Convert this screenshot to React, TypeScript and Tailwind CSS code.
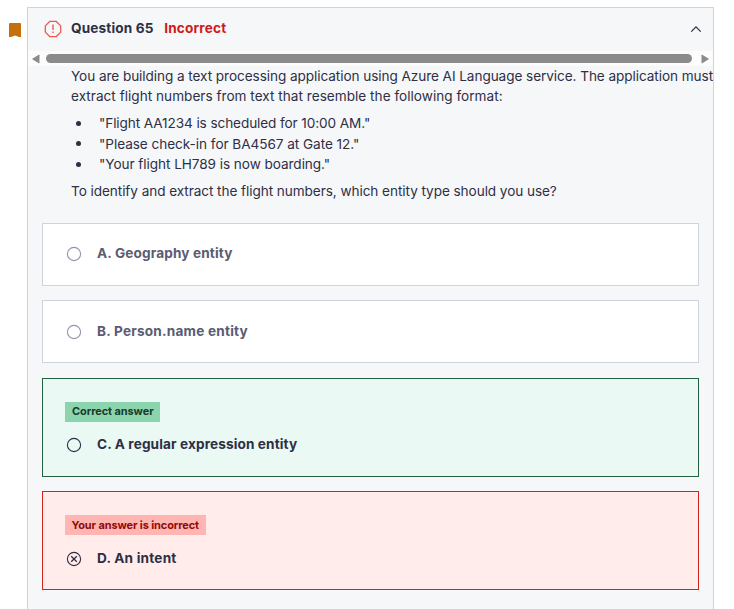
import type { ReactNode } from "react";

function Radio({ className, crossed = false }: { className: string; crossed?: boolean }) {
  return (
    <svg width="16" height="16" viewBox="0 0 16 16" fill="none" stroke="currentColor" className={"shrink-0 " + className}>
      <circle cx="8" cy="8" r="6.6" strokeWidth="1.1" />
      {crossed && <path d="M5.2 5.2l5.6 5.6M10.8 5.2l-5.6 5.6" strokeWidth="1.3" />}
    </svg>
  );
}

function Answer({
  box,
  text,
  radio,
  badge,
  crossed,
  children,
}: {
  box: string;
  text: string;
  radio: string;
  badge?: ReactNode;
  crossed?: boolean;
  children: ReactNode;
}) {
  return (
    <div className={"flex flex-col border pl-[22px] " + box}>
      {badge}
      <div className="flex h-5 items-center pl-px">
        <Radio className={radio} crossed={crossed} />
        <span className={"ml-[15px] whitespace-nowrap pb-0.5 font-bold " + text}>{children}</span>
      </div>
    </div>
  );
}

function Bullet({ text, children }: { text: string; children: ReactNode }) {
  return (
    <li className="flex items-center">
      <i className="ml-[5px] mr-[18px] size-[5px] rounded-full bg-[#2d2f45]" />
      <span className={text}>{children}</span>
    </li>
  );
}

export default function App() {
  return (
    <div className="flex h-[609px] w-[734px] overflow-hidden bg-white pt-[7px] font-['Inter','Liberation_Sans',sans-serif] text-[13.6px] leading-[20.4px] text-[#2d2f45]">
      <div className="w-[27px] shrink-0 pl-[9px] pt-4">
        <svg width="12" height="15" viewBox="0 0 12 15" fill="#c4710d">
          <path d="M1 0h10q1 0 1 1v13H10L6 12.6 2 14H0V1Q0 0 1 0z" />
        </svg>
      </div>
      <div className="flex h-[620px] w-[687px] shrink-0 flex-col border border-[#d1d2e0] bg-[#f6f7f9]">
        <div className="flex h-[43px] shrink-0 items-center pl-4 pr-[11px]">
          <svg width="18" height="18" viewBox="0 0 18 18" fill="none" stroke="#f0574e" strokeWidth="1.3" className="mb-0.5 shrink-0">
            <path d="M5.9 1.3h6.2l4.6 4.6v6.2l-4.6 4.6H5.9l-4.6-4.6V5.9z" strokeLinejoin="round" />
            <path d="M9 4.5v5.6M9 11.6v1.5" strokeWidth="1.4" />
          </svg>
          <span className="ml-[9px] whitespace-nowrap pb-0.5 font-bold tracking-[0.16px]">Question 65</span>
          <span className="ml-[10.5px] whitespace-nowrap pb-0.5 font-bold tracking-[0.18px] text-[#d01b18]">Incorrect</span>
          <svg width="12" height="12" viewBox="0 0 12 12" fill="none" stroke="#2d2f45" strokeWidth="1.3" className="mb-0.5 ml-auto">
            <path d="M1.3 8.6L6 3.9l4.7 4.7" />
          </svg>
        </div>
        <div className="flex h-[15px] shrink-0 items-center bg-[#fcfcfc] pl-1 pr-[4px]">
          <svg width="8" height="10" viewBox="0 0 8 10" fill="#8b8b8b"><path d="M7.5 1.2v7.6q0 .8-.8.4L.6 5.5q-.6-.5 0-1L6.7.8q.8-.4.8.4z" /></svg>
          <div className="mx-[6px] mr-[9px] h-[9px] flex-1 rounded-full bg-[#8b8b8b]" />
          <svg width="8" height="10" viewBox="0 0 8 10" fill="#8b8b8b"><path d="M.5 1.2v7.6q0 .8.8.4l6.1-3.7q.6-.5 0-1L1.3.8Q.5.4.5 1.2z" /></svg>
        </div>
        <div className="flex h-[157px] shrink-0 flex-col overflow-hidden whitespace-nowrap pl-[43px]">
          <p className="tracking-[-0.072px]">You are building a text processing application using Azure AI Language service. The application must</p>
          <p className="tracking-[0.015px]">extract flight numbers from text that resemble the following format:</p>
          <ul className="mt-[6.4px] list-none">
            <Bullet text="tracking-[-0.1px]">"Flight AA1234 is scheduled for 10:00 AM."</Bullet>
            <Bullet text="tracking-[-0.05px]">"Please check-in for BA4567 at Gate 12."</Bullet>
            <Bullet text="tracking-[-0.06px]">"Your flight LH789 is now boarding."</Bullet>
          </ul>
          <p className="mt-[6.4px] tracking-[-0.072px]">To identify and extract the flight numbers, which entity type should you use?</p>
        </div>
        <div className="flex flex-col px-[14px]">
          <Answer box="h-[63px] border-[#d1d2e0] bg-white pt-5" radio="text-[#9194ac]" text="text-[#595c73] tracking-[0.14px]">A. Geography entity</Answer>
          <Answer box="mt-[14px] h-[63px] border-[#d1d2e0] bg-white pt-[21px]" radio="text-[#9194ac]" text="text-[#595c73] tracking-[0.22px]">B. Person.name entity</Answer>
          <Answer
            box="mt-[15px] h-[99px] border-[#206241] bg-[#eaf9f4] pt-[23px]"
            radio="text-[#2d2f45]"
            text="tracking-[0.12px]"
            badge={<div className="mb-[13px] h-5 w-[95px] whitespace-nowrap bg-[#8cd4ae] pl-[7px] text-[11px] font-bold leading-[19px] tracking-[-0.1px] text-[#153d29]">Correct answer</div>}
          >C. A regular expression entity</Answer>
          <Answer
            box="mt-[14px] h-[99px] border-[#d5231b] bg-[#ffeceb] pt-[23px]"
            radio="text-[#2d2f45]"
            text="tracking-[0.22px]"
            crossed
            badge={<div className="mb-[14px] h-5 w-[141px] whitespace-nowrap bg-[#ffb5b1] pl-[6.5px] text-[11px] font-bold leading-5 tracking-[-0.12px] text-[#8f0a0a]">Your answer is incorrect</div>}
          >D. An intent</Answer>
        </div>
      </div>
    </div>
  );
}
